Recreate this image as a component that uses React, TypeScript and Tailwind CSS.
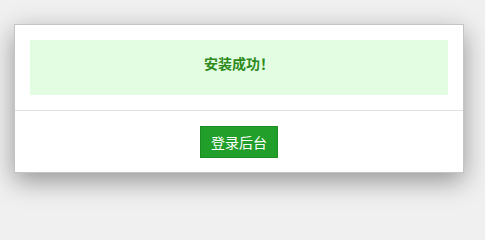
import React from "react";

export default function App() {
  return (
    <div
      className="w-full min-h-screen bg-[#f0f0f0] pt-[24px] pl-[14px]"
      style={{ fontFamily: '"Noto Sans CJK SC", "Liberation Sans", sans-serif' }}
    >
      <div className="w-[450px] bg-white border border-[#c4c4c4] shadow-[0_8px_24px_rgba(0,0,0,0.38)]">
        <div className="p-[15px]">
          <div className="h-[55px] bg-[#e3fde3] flex justify-center pt-[13px]">
            <span className="text-[14px] leading-[20px] font-bold text-[#2d8a1c]">安装成功！</span>
          </div>
        </div>
        <div className="border-t border-[#e2e2e2] flex justify-center pt-[15px] pb-[14px]">
          <button className="h-[32px] px-[10px] bg-[#229e2a] border border-[#1c8c23] text-white text-[14px] leading-[30px]">
            登录后台
          </button>
        </div>
      </div>
    </div>
  );
}
